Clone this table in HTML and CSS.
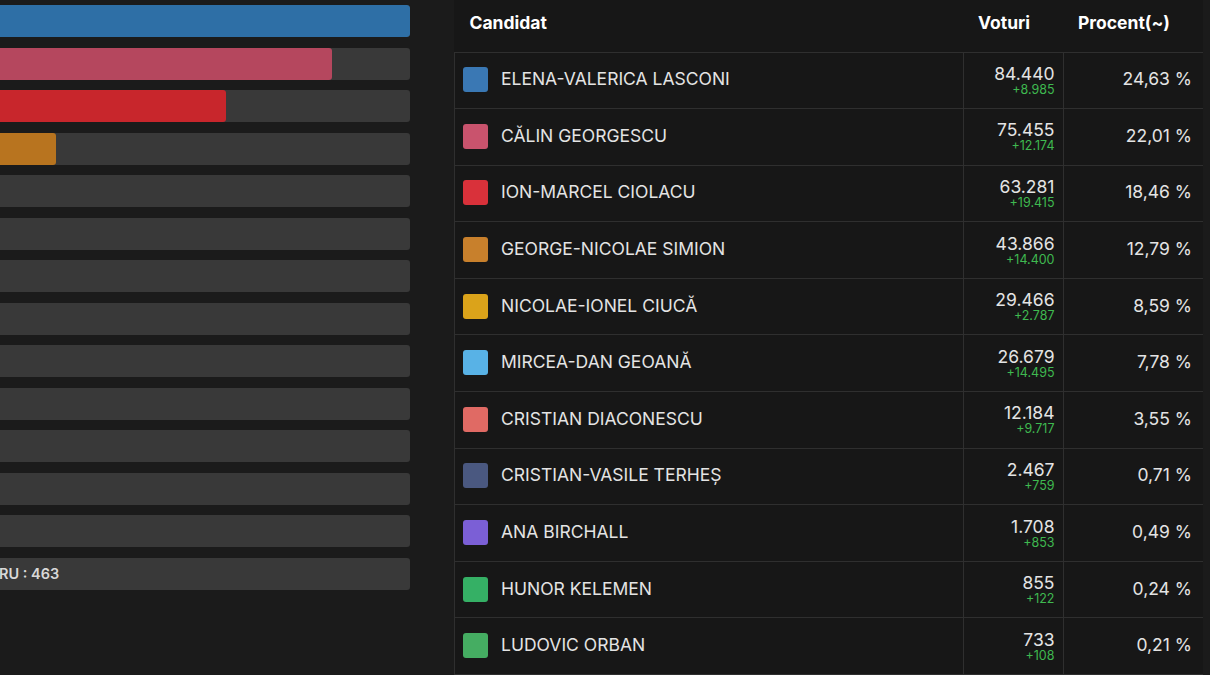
FILE: index.html
```html
<!DOCTYPE html>
<html>
<head>
    <title>Rezultate vot</title>
    <link rel="stylesheet" href="styles.css">
</head>
<body>

<div class="page">
    <div class="bars">
        <div class="bar"><div class="fill" style="width: 100%; background-color: #2e6fa6;"></div></div>
        <div class="bar"><div class="fill" style="width: 81%; background-color: #b5475e;"></div></div>
        <div class="bar"><div class="fill" style="width: 55.1%; background-color: #c8262c;"></div></div>
        <div class="bar"><div class="fill" style="width: 13.7%; background-color: #b8741f;"></div></div>
        <div class="bar"></div>
        <div class="bar"></div>
        <div class="bar"></div>
        <div class="bar"></div>
        <div class="bar"></div>
        <div class="bar"></div>
        <div class="bar"></div>
        <div class="bar"></div>
        <div class="bar"></div>
        <div class="bar"><span class="bar-label">RU : 463</span></div>
    </div>

    <div class="results">
        <table>
            <colgroup>
                <col>
                <col class="col-votes">
                <col class="col-pct">
            </colgroup>
            <thead>
                <tr>
                    <th>Candidat</th>
                    <th>Voturi</th>
                    <th>Procent(~)</th>
                </tr>
            </thead>
            <tbody>
                <tr>
                    <td><span class="swatch" style="background-color: #3a78b4;"></span>ELENA-VALERICA LASCONI</td>
                    <td class="votes">84.440<span class="delta">+8.985</span></td>
                    <td class="pct">24,63 %</td>
                </tr>
                <tr>
                    <td><span class="swatch" style="background-color: #c9536d;"></span>CĂLIN GEORGESCU</td>
                    <td class="votes">75.455<span class="delta">+12.174</span></td>
                    <td class="pct">22,01 %</td>
                </tr>
                <tr>
                    <td><span class="swatch" style="background-color: #d9313a;"></span>ION-MARCEL CIOLACU</td>
                    <td class="votes">63.281<span class="delta">+19.415</span></td>
                    <td class="pct">18,46 %</td>
                </tr>
                <tr>
                    <td><span class="swatch" style="background-color: #c8802c;"></span>GEORGE-NICOLAE SIMION</td>
                    <td class="votes">43.866<span class="delta">+14.400</span></td>
                    <td class="pct">12,79 %</td>
                </tr>
                <tr>
                    <td><span class="swatch" style="background-color: #dba31a;"></span>NICOLAE-IONEL CIUCĂ</td>
                    <td class="votes">29.466<span class="delta">+2.787</span></td>
                    <td class="pct">8,59 %</td>
                </tr>
                <tr>
                    <td><span class="swatch" style="background-color: #58b2e6;"></span>MIRCEA-DAN GEOANĂ</td>
                    <td class="votes">26.679<span class="delta">+14.495</span></td>
                    <td class="pct">7,78 %</td>
                </tr>
                <tr>
                    <td><span class="swatch" style="background-color: #e06a64;"></span>CRISTIAN DIACONESCU</td>
                    <td class="votes">12.184<span class="delta">+9.717</span></td>
                    <td class="pct">3,55 %</td>
                </tr>
                <tr>
                    <td><span class="swatch" style="background-color: #4a5880;"></span>CRISTIAN-VASILE TERHEȘ</td>
                    <td class="votes">2.467<span class="delta">+759</span></td>
                    <td class="pct">0,71 %</td>
                </tr>
                <tr>
                    <td><span class="swatch" style="background-color: #7b5fd6;"></span>ANA BIRCHALL</td>
                    <td class="votes">1.708<span class="delta">+853</span></td>
                    <td class="pct">0,49 %</td>
                </tr>
                <tr>
                    <td><span class="swatch" style="background-color: #35b065;"></span>HUNOR KELEMEN</td>
                    <td class="votes">855<span class="delta">+122</span></td>
                    <td class="pct">0,24 %</td>
                </tr>
                <tr>
                    <td><span class="swatch" style="background-color: #45ad62;"></span>LUDOVIC ORBAN</td>
                    <td class="votes">733<span class="delta">+108</span></td>
                    <td class="pct">0,21 %</td>
                </tr>
            </tbody>
        </table>
    </div>
</div>

</body>
</html>
```

FILE: styles.css
```css
body {
    font-family: Inter, "Noto Sans", sans-serif;
    background-color: #1b1b1b;
    color: #e4e4e4;
    margin: 0;
    padding: 0;
    overflow: hidden;
}
.page {
    display: flex;
    align-items: flex-start;
    gap: 44px;
    padding-right: 7px;
}
.bars {
    width: 410px;
    flex-shrink: 0;
    padding-top: 5px;
    display: flex;
    flex-direction: column;
    gap: 10.5px;
}
.bar {
    height: 32px;
    background-color: #393939;
    border-radius: 0 3px 3px 0;
    overflow: hidden;
    display: flex;
    align-items: center;
}
.fill {
    height: 100%;
    border-radius: 0 3px 3px 0;
}
.bar-label {
    font-size: 14.5px;
    font-weight: 600;
    color: #d8d8d8;
    margin-left: -1px;
}
.results {
    flex: 1;
    background-color: #171717;
}
table {
    width: 100%;
    border-collapse: collapse;
    table-layout: fixed;
}
.col-votes {
    width: 100px;
}
.col-pct {
    width: 140px;
}
th {
    height: 52px;
    box-sizing: border-box;
    padding: 0 15px 6px;
    text-align: left;
    font-size: 17.5px;
    font-weight: 700;
    color: #ffffff;
    vertical-align: middle;
}
td {
    box-sizing: border-box;
    height: 56.6px;
    border: 1px solid #2f2f2f;
    font-size: 17.5px;
    padding: 1px 8px 0;
    vertical-align: middle;
    white-space: nowrap;
}
td:last-child {
    border-right: none;
}
.swatch {
    display: inline-block;
    width: 25px;
    height: 25px;
    border-radius: 3px;
    vertical-align: middle;
    margin-right: 13px;
    position: relative;
    top: -1px;
}
.votes {
    text-align: right;
    line-height: 18px;
    padding-top: 0;
}
.delta {
    display: block;
    font-size: 12.5px;
    line-height: 13px;
    color: #3fb950;
}
.pct {
    text-align: right;
    padding: 0 11px 3px 8px;
}
```
